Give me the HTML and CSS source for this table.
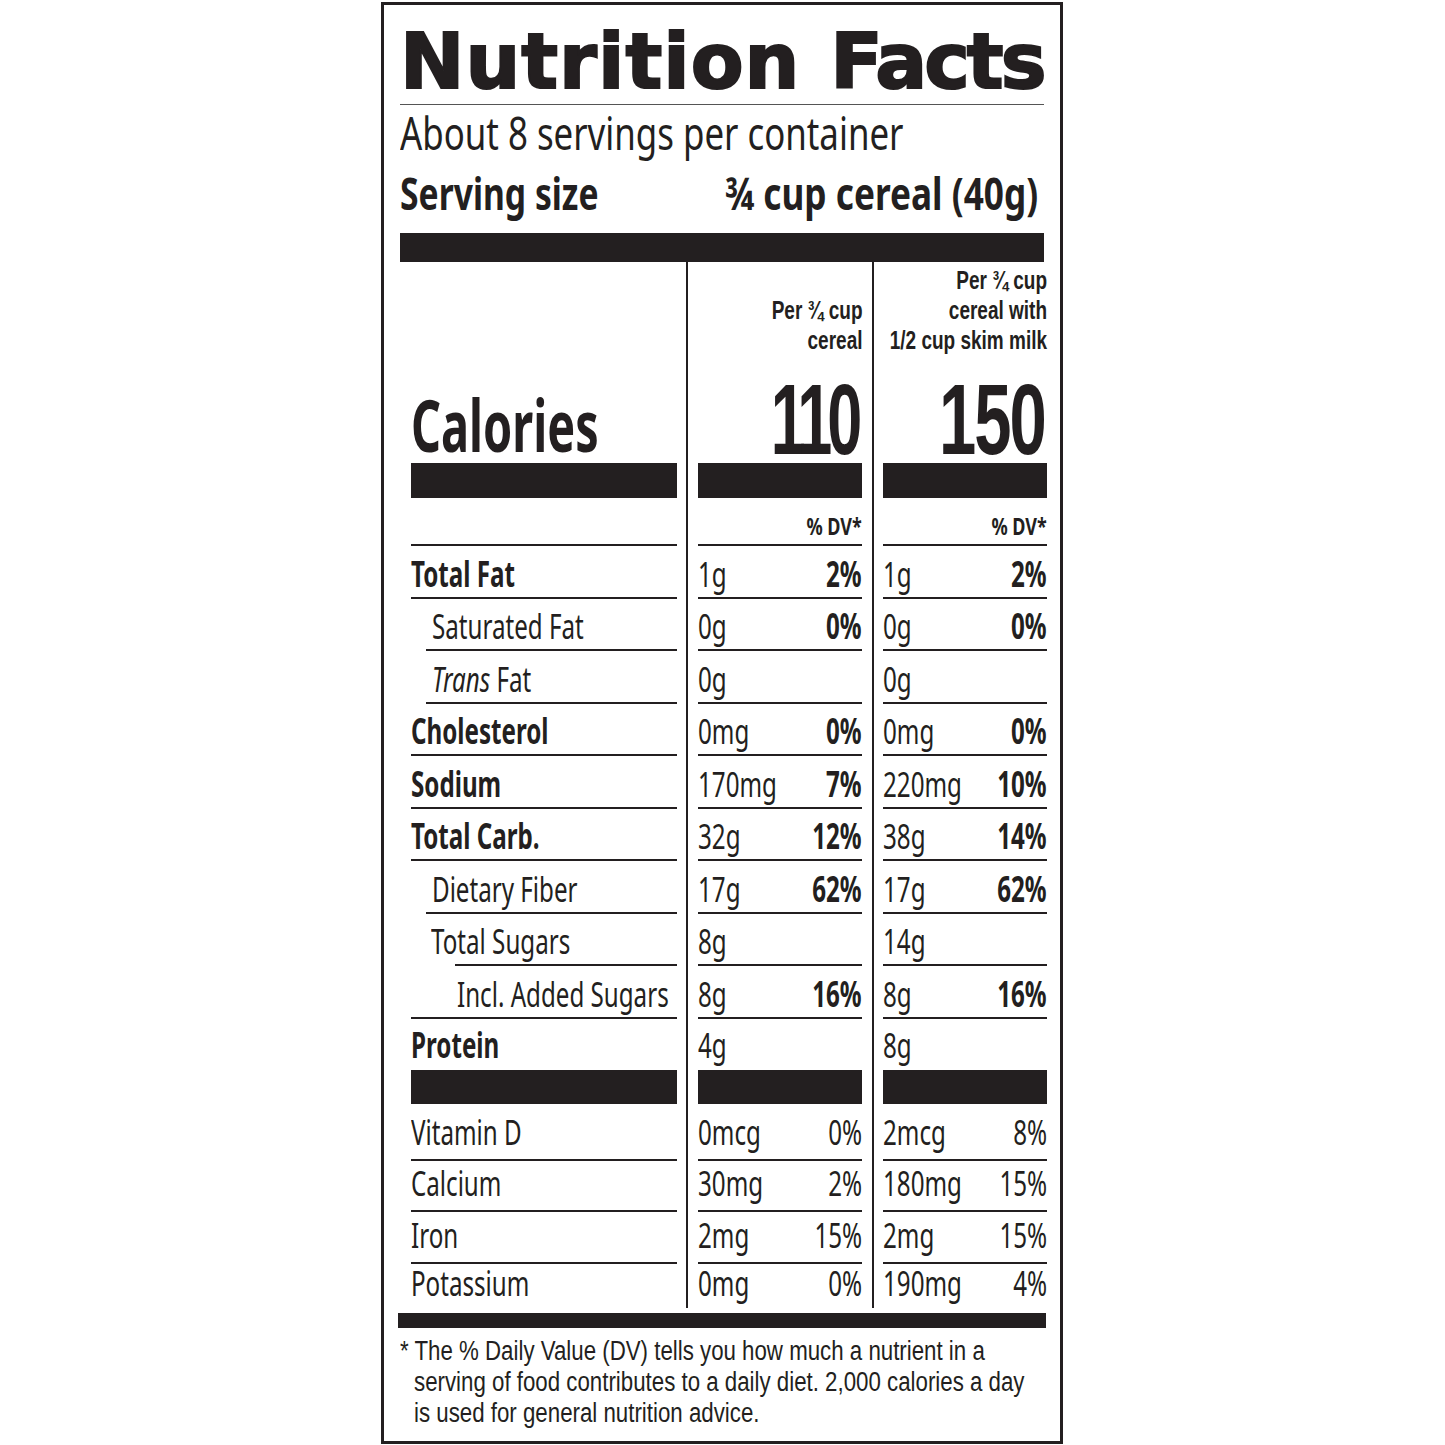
FILE: index.html
```html
<!DOCTYPE html>
<html lang="en">
<head>
<meta charset="utf-8">
<title>Nutrition Facts</title>
<link rel="stylesheet" href="styles.css">
</head>
<body>
<div class="label">
  <h1 class="title">Nutrition <span class="title-b">Facts</span></h1>
  <div class="servings">About 8 servings per container</div>
  <div class="serving-size"><span class="ss-l">Serving size</span><span class="ss-r">¾ cup cereal (40g)</span></div>
  <div class="thick-bar"></div>

  <div class="table">
    <div class="cell c1 head"><span class="cal-label">Calories</span></div>
    <div class="cell c2 head">
      <div class="per">Per ¾ cup<br>cereal</div>
      <div class="cal-num"><span class="n110">110</span></div>
    </div>
    <div class="cell c3 head">
      <div class="per">Per ¾ cup<br>cereal with<br>1/2 cup skim milk</div>
      <div class="cal-num"><span class="n150">150</span></div>
    </div>

    <div class="cell c1"><div class="bar"></div></div>
    <div class="cell c2"><div class="bar"></div></div>
    <div class="cell c3"><div class="bar"></div></div>

    <div class="cell c1"><div class="line"></div></div>
    <div class="cell c2"><div class="line dv"><b class="dvt">% DV*</b></div></div>
    <div class="cell c3"><div class="line dv"><b class="dvt">% DV*</b></div></div>

    <div class="cell c1"><div class="line"><b class="t">Total Fat</b></div></div>
    <div class="cell c2"><div class="line"><span class="t">1g</span><b class="t r">2%</b></div></div>
    <div class="cell c3"><div class="line"><span class="t">1g</span><b class="t r">2%</b></div></div>

    <div class="cell c1"><div class="line ind"><span class="t sub">Saturated Fat</span></div></div>
    <div class="cell c2"><div class="line"><span class="t">0g</span><b class="t r">0%</b></div></div>
    <div class="cell c3"><div class="line"><span class="t">0g</span><b class="t r">0%</b></div></div>

    <div class="cell c1"><div class="line ind"><span class="t sub"><i>Trans</i> Fat</span></div></div>
    <div class="cell c2"><div class="line"><span class="t">0g</span></div></div>
    <div class="cell c3"><div class="line"><span class="t">0g</span></div></div>

    <div class="cell c1"><div class="line"><b class="t">Cholesterol</b></div></div>
    <div class="cell c2"><div class="line"><span class="t">0mg</span><b class="t r">0%</b></div></div>
    <div class="cell c3"><div class="line"><span class="t">0mg</span><b class="t r">0%</b></div></div>

    <div class="cell c1"><div class="line"><b class="t">Sodium</b></div></div>
    <div class="cell c2"><div class="line"><span class="t">170mg</span><b class="t r">7%</b></div></div>
    <div class="cell c3"><div class="line"><span class="t">220mg</span><b class="t r">10%</b></div></div>

    <div class="cell c1"><div class="line"><b class="t">Total Carb.</b></div></div>
    <div class="cell c2"><div class="line"><span class="t">32g</span><b class="t r">12%</b></div></div>
    <div class="cell c3"><div class="line"><span class="t">38g</span><b class="t r">14%</b></div></div>

    <div class="cell c1"><div class="line ind"><span class="t sub">Dietary Fiber</span></div></div>
    <div class="cell c2"><div class="line"><span class="t">17g</span><b class="t r">62%</b></div></div>
    <div class="cell c3"><div class="line"><span class="t">17g</span><b class="t r">62%</b></div></div>

    <div class="cell c1"><div class="line ind2"><span class="t sub2">Total Sugars</span></div></div>
    <div class="cell c2"><div class="line"><span class="t">8g</span></div></div>
    <div class="cell c3"><div class="line"><span class="t">14g</span></div></div>

    <div class="cell c1"><div class="line"><span class="t sub3">Incl. Added Sugars</span></div></div>
    <div class="cell c2"><div class="line"><span class="t">8g</span><b class="t r">16%</b></div></div>
    <div class="cell c3"><div class="line"><span class="t">8g</span><b class="t r">16%</b></div></div>

    <div class="cell c1"><div class="line nb"><b class="t">Protein</b></div></div>
    <div class="cell c2"><div class="line nb"><span class="t">4g</span></div></div>
    <div class="cell c3"><div class="line nb"><span class="t">8g</span></div></div>

    <div class="cell c1"><div class="bar"></div></div>
    <div class="cell c2"><div class="bar"></div></div>
    <div class="cell c3"><div class="bar"></div></div>

    <div class="cell c1"><div class="line vit"><span class="t">Vitamin D</span></div></div>
    <div class="cell c2"><div class="line vit"><span class="t">0mcg</span><span class="t r">0%</span></div></div>
    <div class="cell c3"><div class="line vit"><span class="t">2mcg</span><span class="t r">8%</span></div></div>

    <div class="cell c1"><div class="line vit"><span class="t">Calcium</span></div></div>
    <div class="cell c2"><div class="line vit"><span class="t">30mg</span><span class="t r">2%</span></div></div>
    <div class="cell c3"><div class="line vit"><span class="t">180mg</span><span class="t r">15%</span></div></div>

    <div class="cell c1"><div class="line vit"><span class="t">Iron</span></div></div>
    <div class="cell c2"><div class="line vit"><span class="t">2mg</span><span class="t r">15%</span></div></div>
    <div class="cell c3"><div class="line vit"><span class="t">2mg</span><span class="t r">15%</span></div></div>

    <div class="cell c1"><div class="line nb"><span class="t">Potassium</span></div></div>
    <div class="cell c2"><div class="line nb"><span class="t">0mg</span><span class="t r">0%</span></div></div>
    <div class="cell c3"><div class="line nb"><span class="t">190mg</span><span class="t r">4%</span></div></div>
  </div>

  <div class="bottom-bar"></div>
  <p class="foot">* The % Daily Value (DV) tells you how much a nutrient in a<br>serving of food contributes to a daily diet. 2,000 calories a day<br>is used for general nutrition advice.</p>
</div>
</body>
</html>
```

FILE: styles.css
```css
* {
  box-sizing: border-box;
}

body {
  margin: 0;
  background: #ffffff;
  color: #231f20;
  font-family: "Noto Sans", "Open Sans", sans-serif;
}

.label {
  margin: 2px 0 0 381px;
  width: 682px;
  height: 1442px;
  border: 3px solid #231f20;
  padding: 0 16px;
}

.title {
  margin: 0;
  padding: 18px 0 4px 0;
  font-family: "DejaVu Sans", sans-serif;
  font-weight: bold;
  font-size: 77px;
  line-height: 77px;
  letter-spacing: 1px;
  word-spacing: 2px;
  -webkit-text-stroke: 2px #231f20;
  border-bottom: 1px solid #555;
  white-space: nowrap;
}

.title-b {
  letter-spacing: -3px;
}

.servings {
  margin-top: 5px;
  font-size: 45px;
  line-height: 45px;
  white-space: nowrap;
  transform: scaleX(0.774);
  transform-origin: left bottom;
}

.serving-size {
  margin-top: 16px;
  display: flex;
  justify-content: space-between;
  padding-right: 6px;
  font-weight: bold;
  font-size: 44px;
  line-height: 44px;
  white-space: nowrap;
}

.ss-l {
  display: inline-block;
  margin-right: -80px;
  transform: scaleX(0.765);
  transform-origin: left bottom;
}

.ss-r {
  display: inline-block;
  transform: scaleX(0.8);
  transform-origin: right bottom;
}

.thick-bar {
  margin-top: 18px;
  height: 29px;
  background: #231f20;
}

.table {
  display: grid;
  grid-template-columns: 286px 186px 175px;
  grid-template-rows: 201px 35px 48px repeat(9, 52.5px) 51.5px 34px 57px 51px 52px 44px;
  margin-right: -3px;
}

.cell {
  padding: 0 9px 0 11px;
}

.c2 {
  border-left: 2px solid #231f20;
  padding: 0 10px;
}

.c3 {
  border-left: 2px solid #231f20;
  padding: 0 0 0 9px;
}

.head {
  display: flex;
  flex-direction: column;
  justify-content: flex-end;
}

.cal-label {
  display: inline-block;
  align-self: flex-start;
  margin-bottom: 3px;
  font-weight: bold;
  font-size: 72px;
  line-height: 72px;
  transform: scaleX(0.65);
  transform-origin: left bottom;
  white-space: nowrap;
}

.per {
  align-self: flex-end;
  font-family: "Liberation Sans", "Noto Sans", sans-serif;
  font-weight: bold;
  font-size: 25px;
  line-height: 30px;
  text-align: right;
  white-space: nowrap;
  transform: scaleX(0.76);
  transform-origin: right bottom;
}

.cal-num {
  margin-top: 24px;
  padding-bottom: 4px;
  text-align: right;
  font-family: "Liberation Sans", "Noto Sans", sans-serif;
  font-weight: bold;
  font-size: 100px;
  line-height: 80px;
  white-space: nowrap;
}

.cal-num span {
  display: inline-block;
  transform-origin: right bottom;
}

.n110 {
  letter-spacing: -8px;
  margin-right: 5px;
  transform: scaleX(0.63);
}

.n150 {
  letter-spacing: -3px;
  margin-right: 2px;
  transform: scaleX(0.67);
}

.bar {
  height: 100%;
  background: #231f20;
}

.line {
  height: 100%;
  display: flex;
  justify-content: space-between;
  align-items: flex-end;
  padding-bottom: 6px;
  border-bottom: 2px solid #231f20;
  font-size: 35px;
  line-height: 1;
  white-space: nowrap;
}

.line.vit {
  padding-bottom: 10px;
}

.t {
  display: inline-block;
  margin-right: -40px;
  transform: scaleX(0.69);
  transform-origin: left bottom;
}

.t.r {
  margin-right: 0;
  margin-left: -40px;
  transform-origin: right bottom;
}

.line.dv {
  justify-content: flex-end;
  padding-bottom: 6px;
  font-size: 24px;
}

.dvt {
  display: inline-block;
  transform: scaleX(0.75);
  transform-origin: right bottom;
}

.line.nb {
  border-bottom-color: transparent;
}

.line.ind {
  margin-left: 15px;
}

.line.ind2 {
  margin-left: 44px;
}

.sub {
  margin-left: 6px;
}

.sub2 {
  margin-left: -24px;
}

.sub3 {
  margin-left: 46px;
}

.bottom-bar {
  margin: 5px -2px 0 -2px;
  height: 15px;
  background: #231f20;
}

.foot {
  margin: 8px 0 0 0;
  padding-left: 17px;
  text-indent: -17px;
  font-family: "Liberation Sans", "Noto Sans", sans-serif;
  font-size: 27px;
  line-height: 31px;
  white-space: nowrap;
  transform: scaleX(0.825);
  transform-origin: left top;
}
```
